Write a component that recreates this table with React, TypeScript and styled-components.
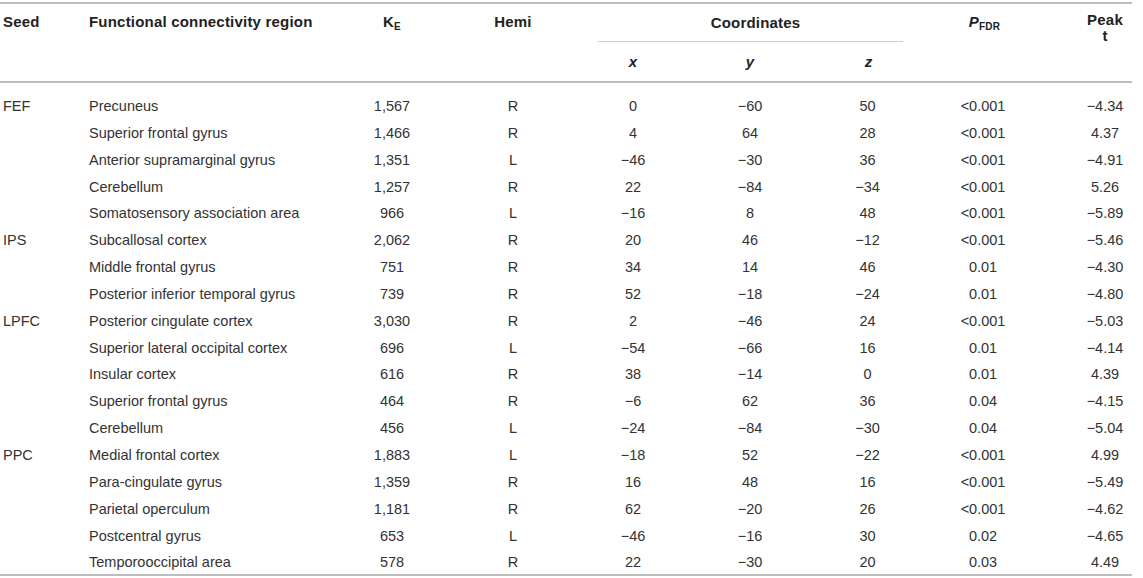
import styled, { createGlobalStyle } from "styled-components";

const GlobalStyle = createGlobalStyle`
  body {
    margin: 0;
    background: #fff;
    font-family: "Liberation Sans", Arial, sans-serif;
  }
`;

const Wrapper = styled.div`
  padding-top: 2px;
  width: 1132px;
`;

const Table = styled.table`
  width: 1132px;
  table-layout: fixed;
  border-collapse: separate;
  border-spacing: 0;
  color: #333;
  font-size: 14.5px;
`;

const HeadCell = styled.th<{ $align?: "left" | "center" }>`
  font-weight: bold;
  font-size: 15px;
  letter-spacing: 0.2px;
  color: #222;
  line-height: 17px;
  text-align: ${(p) => p.$align || "center"};
  vertical-align: top;
  padding: 9px 3px 0;
  border-top: 2px solid #bdbdbd;
  border-bottom: 2px solid #bdbdbd;
`;

const GroupCell = styled.th`
  font-weight: bold;
  font-size: 15px;
  letter-spacing: 0.2px;
  color: #222;
  line-height: 17px;
  text-align: center;
  vertical-align: middle;
  padding: 10px 0 10px 10px;
  border-top: 2px solid #bdbdbd;
  border-bottom: 1px solid #cfcfcf;
`;

const AxisCell = styled.th<{ $pad?: number }>`
  font-weight: bold;
  font-style: italic;
  font-size: 15px;
  color: #222;
  line-height: 17px;
  text-align: center;
  padding: 11px 0 11px ${(p) => p.$pad || 0}px;
  border-bottom: 2px solid #bdbdbd;
`;

const PeakCell = styled(HeadCell)`
  line-height: 15.5px;
  padding-top: 8px;
`;

const PCell = styled(HeadCell)`
  padding-right: 15px;
`;

const Sub = styled.sub`
  font-size: 10px;
  vertical-align: -3px;
  line-height: 0;
  font-style: normal;
`;

const Cell = styled.td<{ $align?: "left" | "center"; $padLeft?: number; $padRight?: number }>`
  line-height: 16.85px;
  padding: 5px ${(p) => p.$padRight ?? 3}px 5px ${(p) => p.$padLeft ?? 3}px;
  text-align: ${(p) => p.$align || "center"};
  white-space: nowrap;
`;

const Row = styled.tr`
  &:first-child td {
    padding-top: 15px;
  }
  &:last-child td {
    padding-bottom: 3px;
    border-bottom: 2px solid #bdbdbd;
  }
`;

type Entry = [string, string, string, string, string, string, string, string, string];

const m = "\u2212";

const rows: Entry[] = [
  ["FEF", "Precuneus", "1,567", "R", "0", `${m}60`, "50", "<0.001", `${m}4.34`],
  ["", "Superior frontal gyrus", "1,466", "R", "4", "64", "28", "<0.001", "4.37"],
  ["", "Anterior supramarginal gyrus", "1,351", "L", `${m}46`, `${m}30`, "36", "<0.001", `${m}4.91`],
  ["", "Cerebellum", "1,257", "R", "22", `${m}84`, `${m}34`, "<0.001", "5.26"],
  ["", "Somatosensory association area", "966", "L", `${m}16`, "8", "48", "<0.001", `${m}5.89`],
  ["IPS", "Subcallosal cortex", "2,062", "R", "20", "46", `${m}12`, "<0.001", `${m}5.46`],
  ["", "Middle frontal gyrus", "751", "R", "34", "14", "46", "0.01", `${m}4.30`],
  ["", "Posterior inferior temporal gyrus", "739", "R", "52", `${m}18`, `${m}24`, "0.01", `${m}4.80`],
  ["LPFC", "Posterior cingulate cortex", "3,030", "R", "2", `${m}46`, "24", "<0.001", `${m}5.03`],
  ["", "Superior lateral occipital cortex", "696", "L", `${m}54`, `${m}66`, "16", "0.01", `${m}4.14`],
  ["", "Insular cortex", "616", "R", "38", `${m}14`, "0", "0.01", "4.39"],
  ["", "Superior frontal gyrus", "464", "R", `${m}6`, "62", "36", "0.04", `${m}4.15`],
  ["", "Cerebellum", "456", "L", `${m}24`, `${m}84`, `${m}30`, "0.04", `${m}5.04`],
  ["PPC", "Medial frontal cortex", "1,883", "L", `${m}18`, "52", `${m}22`, "<0.001", "4.99"],
  ["", "Para-cingulate gyrus", "1,359", "R", "16", "48", "16", "<0.001", `${m}5.49`],
  ["", "Parietal operculum", "1,181", "R", "62", `${m}20`, "26", "<0.001", `${m}4.62`],
  ["", "Postcentral gyrus", "653", "L", `${m}46`, `${m}16`, "30", "0.02", `${m}4.65`],
  ["", "Temporooccipital area", "578", "R", "22", `${m}30`, "20", "0.03", "4.49"],
];

// seed, region, KE, hemi, x, y, z, P, peak
const widths = [86, 270, 72, 170, 70, 164, 71, 175, 54];

export default function App() {
  return (
    <Wrapper>
      <GlobalStyle />
      <Table>
        <colgroup>
          {widths.map((w, i) => (
            <col key={i} width={w} />
          ))}
        </colgroup>
        <thead>
          <tr>
            <HeadCell rowSpan={2} $align="left">Seed</HeadCell>
            <HeadCell rowSpan={2} $align="left">Functional connectivity region</HeadCell>
            <HeadCell rowSpan={2}>
              K<Sub>E</Sub>
            </HeadCell>
            <HeadCell rowSpan={2}>Hemi</HeadCell>
            <GroupCell colSpan={3}>Coordinates</GroupCell>
            <PCell rowSpan={2}>
              <i>P</i>
              <Sub>FDR</Sub>
            </PCell>
            <PeakCell rowSpan={2}>
              Peak
              <br />t
            </PeakCell>
          </tr>
          <tr>
            <AxisCell>x</AxisCell>
            <AxisCell>y</AxisCell>
            <AxisCell $pad={2}>z</AxisCell>
          </tr>
        </thead>
        <tbody>
          {rows.map((r, i) => (
            <Row key={i}>
              <Cell $align="left">{r[0]}</Cell>
              <Cell $align="left">{r[1]}</Cell>
              <Cell>{r[2]}</Cell>
              <Cell>{r[3]}</Cell>
              <Cell $padLeft={0} $padRight={0}>{r[4]}</Cell>
              <Cell $padLeft={0} $padRight={0}>{r[5]}</Cell>
              <Cell $padLeft={0} $padRight={0}>{r[6]}</Cell>
              <Cell $padRight={18}>{r[7]}</Cell>
              <Cell>{r[8]}</Cell>
            </Row>
          ))}
        </tbody>
      </Table>
    </Wrapper>
  );
}
